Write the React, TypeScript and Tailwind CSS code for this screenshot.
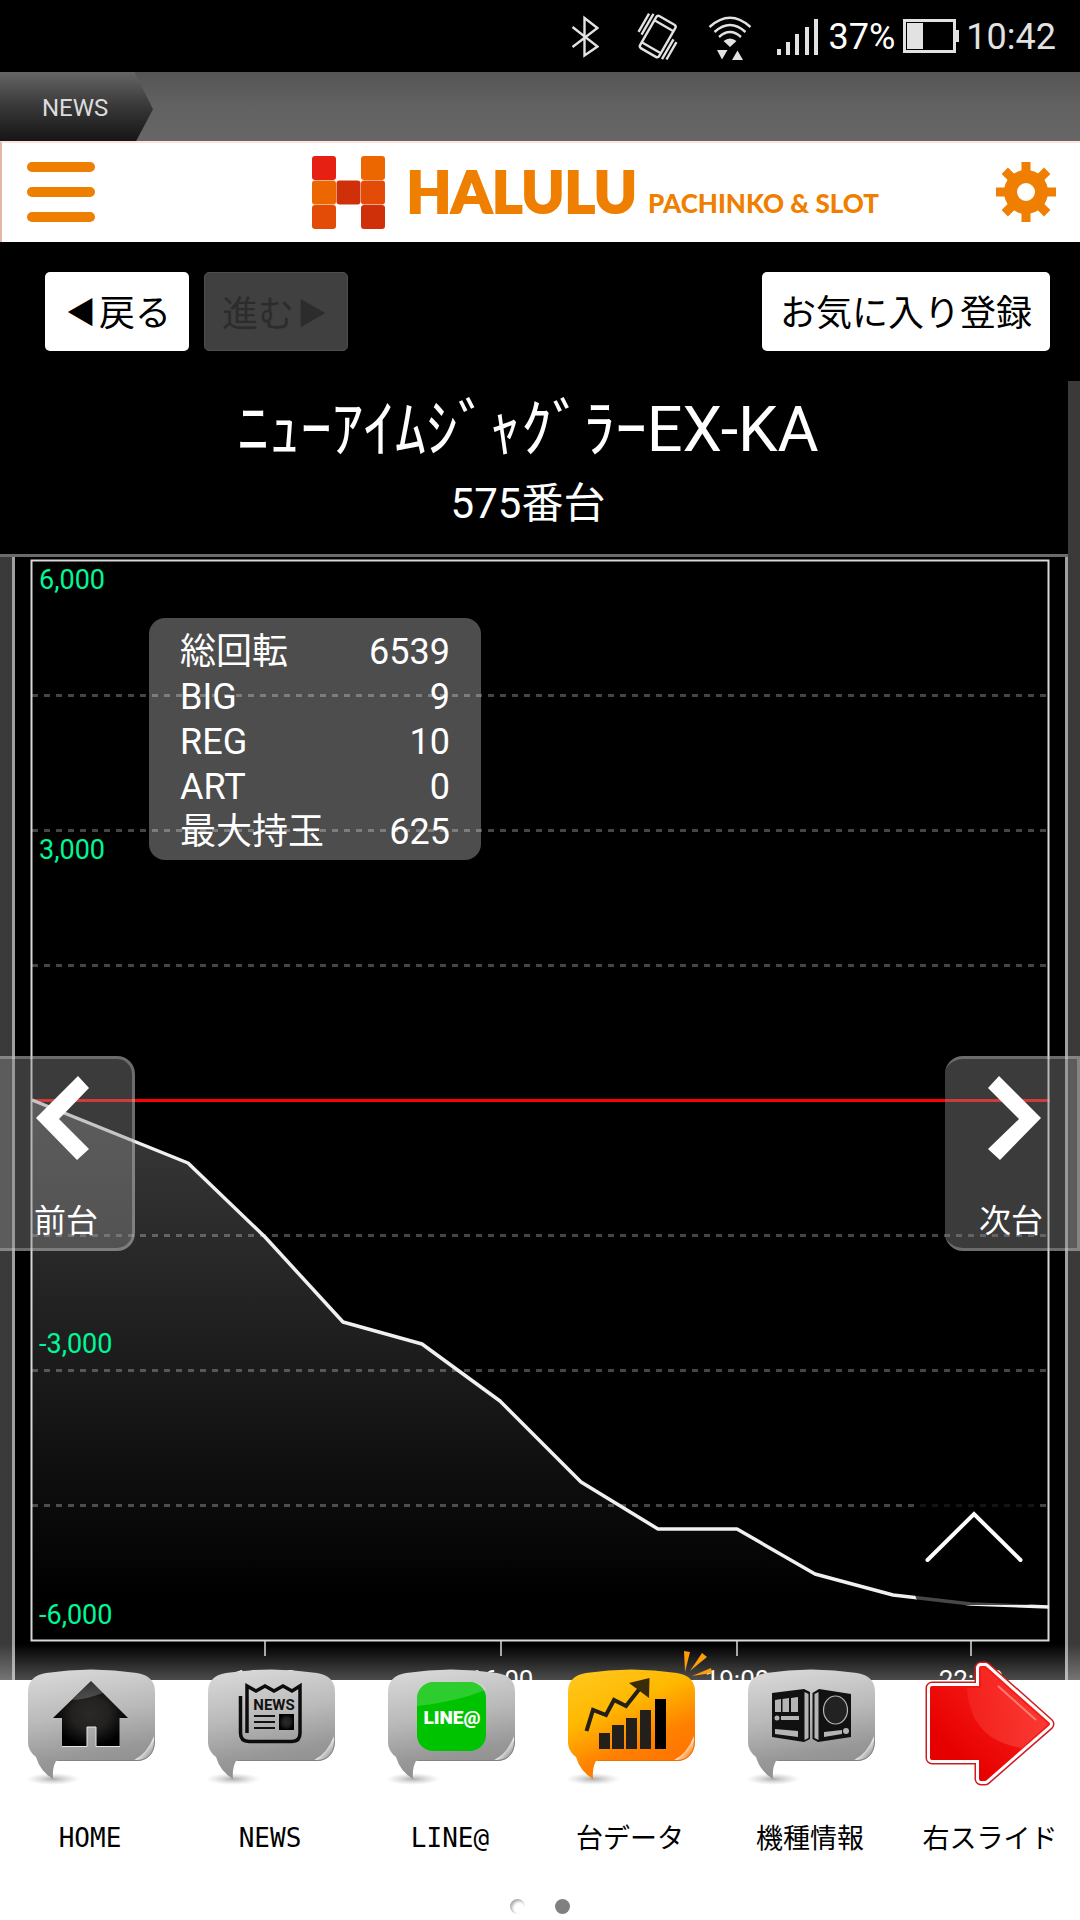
import type { ReactNode } from "react";

const SANS = "font-['Roboto','Noto_Sans_CJK_JP',sans-serif]";
const CJK = "font-['Noto_Sans_CJK_JP',sans-serif]";

function StatusBar() {
  return (
    <div className="flex h-[72px] shrink-0 items-center justify-end overflow-hidden bg-black pt-[2px] pr-6 text-[36px] leading-[42px] text-[#e2e2e2]">
      <svg className="mr-[33px]" width="28" height="72" viewBox="572 0 28 72" fill="none" stroke="#e2e2e2" strokeWidth="2.4" aria-label="Bluetooth">
        <path d="M573.5 26L598.5 45.5L585.5 54.5V17L598.5 27L573.5 46" />
      </svg>
      <svg className="mr-[26px]" width="50" height="72" viewBox="633 0 50 72" fill="none" stroke="#e2e2e2" strokeWidth="2.4" aria-label="Vibrate">
        <g transform="rotate(30 658.5 36)">
          <rect x="647.5" y="17" width="22" height="37" rx="2.5" />
          <path d="M647.5 23H669.5M647.5 48.500H669.500M643.5 18V42M639.500 20V41M673.5 53V30M677.5 51V31" />
        </g>
      </svg>
      <svg className="mr-[25px]" width="44" height="72" viewBox="708 0 44 72" fill="none" stroke="#e2e2e2" strokeWidth="2.4" aria-label="Wi-Fi">
        <path d="M709.500 26Q730 7.500 750.500 26M714.500 31Q730 17 745.500 31M719 36Q730 26 741 36" />
        <path d="M723.500 40Q730 35 736.500 40L730 46ZM717 49H727.500L722 58.500ZM732 59H743L737.500 49.500Z" fill="#e2e2e2" stroke="none" />
      </svg>
      <svg className="mr-[10px]" width="42" height="72" viewBox="777 0 42 72" fill="#e2e2e2" aria-label="Signal">
        <path d="M777 48h4v6h-4zM786 41h4v13h-4zM795 33h4v21h-4zM805 26h4v28h-4zM814 18h4v36h-4z" />
      </svg>
      <span className="text-white">37%</span>
      <svg className="mr-[6px] ml-[7px]" width="58" height="72" viewBox="902 1 58 72" aria-label="Battery">
        <rect x="904.500" y="20.500" width="50" height="31" fill="none" stroke="#e2e2e2" strokeWidth="3" />
        <path d="M907 23h16v26h-16zM955 30h4v12h-4z" fill="#e2e2e2" />
      </svg>
      <span>10:42</span>
    </div>
  );
}

function NewsTicker() {
  return (
    <div className="flex h-[69px] shrink-0 bg-linear-to-b from-[#555] via-[#626262] to-[#666]">
      <a
        href="#news"
        className="flex w-[153px] items-center bg-linear-to-b from-[#666] via-[#383838] to-[#161616] pt-[2px] pl-[42px] text-2xl text-[#dcdcdc] [clip-path:polygon(0_0,88%_0,100%_54%,89%_100%,0_100%)]"
      >
        NEWS
      </a>
    </div>
  );
}

function Header() {
  return (
    <header className="flex h-[101px] shrink-0 items-center border-t-2 border-l-2 border-t-[#fbe3de] border-l-[#e3b8a0] bg-white pr-6 pb-[2px] pl-[25px]">
      <button type="button" aria-label="Menu" className="flex flex-col gap-[15px]">
        <span className="h-[10px] w-[68px] rounded-full bg-[#ee7f00]" />
        <span className="h-[10px] w-[68px] rounded-full bg-[#ee7f00]" />
        <span className="h-[10px] w-[68px] rounded-full bg-[#ee7f00]" />
      </button>
      <a href="#top" className="mr-[117px] ml-auto flex items-center gap-[20px] font-['Lato'] font-black text-[#ee7f00]">
        <svg width="74" height="74" viewBox="0 0 74 74" aria-hidden="true">
          <rect x="0" y="1" width="24" height="24" rx="3" fill="#e62013" />
          <rect x="49" y="1" width="24" height="24" rx="3" fill="#ec6700" />
          <rect x="0" y="25.500" width="24" height="24" rx="3" fill="#ec6700" />
          <rect x="24.500" y="25.500" width="24" height="24" rx="3" fill="#cf300a" />
          <rect x="49" y="25.500" width="24" height="24" rx="3" fill="#e34c06" />
          <rect x="0" y="50" width="24" height="24" rx="3" fill="#e34c06" />
          <rect x="49" y="50" width="24" height="24" rx="3" fill="#cf300a" />
        </svg>
        <span className="flex items-baseline gap-[11px] pb-[2px]">
          <span className="text-[58px] leading-none [-webkit-text-stroke:2px_#ee7f00]">HALULU</span>
          <span className="text-[26px] leading-none">PACHINKO &amp; SLOT</span>
        </span>
      </a>
      <button type="button" aria-label="Settings">
        <svg width="60" height="60" viewBox="-30 -30 60 60" aria-hidden="true">
          <g fill="#ee7f00">
            {[0, 45, 90, 135, 180, 225, 270, 315].map((a) => (
              <rect key={a} x="-4.500" y="-30" width="9" height="14" transform={`rotate(${a})`} />
            ))}
          </g>
          <circle r="15.500" fill="none" stroke="#ee7f00" strokeWidth="13" />
        </svg>
      </button>
    </header>
  );
}

function Toolbar() {
  return (
    <div className={`flex shrink-0 gap-[15px] bg-black py-[30px] pr-[30px] pl-[45px] text-[36px] leading-[77px] ${CJK}`}>
      <button type="button" className="flex h-[79px] w-36 justify-center rounded-[5px] bg-white text-black">
        <span className="w-9 text-center text-[30px]">◀</span>
        戻る
      </button>
      <button type="button" disabled className="flex h-[79px] w-36 justify-center rounded-[5px] border border-[#4f4f4f] bg-[#404040] text-[#2c2c2c]">
        進む
        <span className="w-9 text-center text-[30px]">▶</span>
      </button>
      <button type="button" className="ml-auto flex h-[79px] rounded-[5px] bg-white px-[18px] text-black">
        お気に入り登録
      </button>
    </div>
  );
}

const POINTS: [number, number][] = [
  [32, 1100], [188, 1163], [265, 1237], [343, 1322], [422, 1344], [500, 1401], [581, 1482],
  [658, 1529], [737, 1529], [815, 1574], [893, 1595], [971, 1604], [1049, 1607],
];

const LINE = POINTS.map((p) => p.join(",")).join(" ");

const Y_LABELS: [string, number][] = [["6,000", 589], ["3,000", 859], ["-3,000", 1353], ["-6,000", 1624]];
const X_LABELS: [string, number][] = [["13:00", 265], ["16:00", 501], ["19:00", 737], ["22:00", 971]];

function Chart() {
  return (
    <svg className="block w-full" viewBox="15 557 1050 1160" aria-label="スランプグラフ">
      <defs>
        <linearGradient id="area" x1="0" y1="1100" x2="0" y2="1600" gradientUnits="userSpaceOnUse">
          <stop offset="0" stopColor="#3a3a3a" />
          <stop offset="1" stopColor="#000" />
        </linearGradient>
      </defs>
      <polygon points={`${LINE} 1049,1640 32,1640`} fill="url(#area)" />
      <g stroke="#fff" strokeOpacity=".27" strokeWidth="3" strokeDasharray="6 6">
        {[695, 830, 965, 1235, 1370, 1505].map((y) => (
          <line key={y} x1="32" x2="1049" y1={y + 0.5} y2={y + 0.5} />
        ))}
      </g>
      <line x1="32" x2="1050" y1="1100.500" y2="1100.500" stroke="#f00" strokeWidth="3" />
      <rect x="31.500" y="560.500" width="1017" height="1080" fill="none" stroke="#d8d8d8" strokeWidth="2" />
      <polyline points={LINE} fill="none" stroke="#f0f0f0" strokeWidth="3.500" strokeLinejoin="round" />
      <g fill="#00f896" fontSize="27">
        {Y_LABELS.map(([t, y]) => (
          <text key={t} x="39" y={y}>{t}</text>
        ))}
      </g>
      <g fill="#fff" fontSize="26" textAnchor="middle">
        {X_LABELS.map(([t, x]) => (
          <g key={t}>
            <line x1={x} x2={x} y1="1641" y2="1656" stroke="#d8d8d8" strokeWidth="1.500" />
            <text x={x} y="1689">{t}</text>
          </g>
        ))}
      </g>
    </svg>
  );
}

const STATS = [
  ["総回転", "6539"],
  ["BIG", "9"],
  ["REG", "10"],
  ["ART", "0"],
  ["最大持玉", "625"],
];

function Stats() {
  return (
    <div className="absolute top-16 left-[149px] w-[332px] rounded-2xl bg-white/30 px-[31px] pt-3 pb-[5px]">
      <table className="w-full text-[36px] leading-[45px] text-white">
        <tbody>
          {STATS.map(([k, v]) => (
            <tr key={k}>
              <th scope="row" className="p-0 text-left font-normal">{k}</th>
              <td className="p-0 text-right">{v}</td>
            </tr>
          ))}
        </tbody>
      </table>
    </div>
  );
}

function Machine() {
  return (
    <main className="relative flex min-h-0 flex-1 flex-col overflow-hidden bg-[#3a3a3a]">
      <div className="mr-3 shrink-0 bg-black pt-[13px] pr-3 pb-[22px] text-center text-white">
        <h1 className="text-[63px] leading-[72px]">ﾆｭｰｱｲﾑｼﾞｬｸﾞﾗｰEX-KA</h1>
        <p className="mt-[10px] text-[42px] leading-[56px]">575番台</p>
      </div>
      <section className="relative min-h-0 flex-1">
        <div className="mr-3 h-[3px] bg-[#6b6b6b]" />
        <div className="mx-3 border-x-3 border-[#a0a0a0] bg-black">
          <Chart />
        </div>
        <Stats />
        <button
          type="button"
          className="absolute top-[502px] left-0 flex h-[195px] w-[135px] flex-col items-center rounded-r-[18px] border-y-3 border-r-3 border-white/25 bg-[#8c8c8c]/42 pt-[17px] text-[32px] leading-[48px] text-white"
        >
          <svg className="mr-[6px]" width="54" height="86" viewBox="36 1076 54 86" fill="#fff" aria-hidden="true">
            <path d="M78 1076L89 1088L59 1119L89 1149L77 1160L36 1118Z" />
          </svg>
          <span className="mt-[35px]">前台</span>
        </button>
        <button
          type="button"
          className="absolute top-[502px] right-0 flex h-[195px] w-[135px] flex-col items-center rounded-l-[18px] border-y-3 border-r-3 border-white/25 bg-[#8c8c8c]/42 pt-[17px] text-[32px] leading-[48px] text-white"
        >
          <svg className="ml-2" width="54" height="86" viewBox="988 1076 54 86" fill="#fff" aria-hidden="true">
            <path d="M999 1076L988 1088L1019 1119L988 1149L1000 1160L1041 1118Z" />
          </svg>
          <span className="mt-[35px]">次台</span>
        </button>
        <div className="absolute inset-x-0 bottom-0 h-9 bg-linear-to-t from-white/30 to-white/0" />
        <button
          type="button"
          aria-label="ページトップへ"
          className="absolute right-[42px] bottom-[75px] flex h-[123px] w-[123px] rounded-xl bg-black/70 pt-[29px] pl-[10px]"
        >
          <svg width="98" height="52" viewBox="0 0 98 52" fill="none" stroke="#fff" strokeWidth="4" strokeLinecap="round" aria-hidden="true">
            <path d="M2.500 49L49 3L95.500 49" />
          </svg>
        </button>
      </section>
    </main>
  );
}

function Defs() {
  return (
    <svg width="0" height="0" className="absolute" aria-hidden="true">
      <defs>
        <linearGradient id="grey" x1="0.400" y1="0" x2="0.600" y2="1">
          <stop offset="0" stopColor="#d6d6d6" />
          <stop offset=".4" stopColor="#bababa" />
          <stop offset=".75" stopColor="#989898" />
          <stop offset="1" stopColor="#8c8c8c" />
        </linearGradient>
        <linearGradient id="orange" x1="0.200" y1="0" x2="0.700" y2="1">
          <stop offset="0" stopColor="#ffc61a" />
          <stop offset=".35" stopColor="#ffb800" />
          <stop offset=".7" stopColor="#ff7f00" />
          <stop offset="1" stopColor="#ff7200" />
        </linearGradient>
        <linearGradient id="peel" x1="0" y1="0" x2="1" y2="1">
          <stop offset=".35" stopColor="#fff" stopOpacity="0" />
          <stop offset=".55" stopColor="#fff" stopOpacity=".75" />
          <stop offset=".8" stopColor="#fff" stopOpacity=".1" />
        </linearGradient>
        <radialGradient id="shade">
          <stop offset="0" stopColor="#777" stopOpacity=".6" />
          <stop offset="1" stopColor="#aaa" stopOpacity="0" />
        </radialGradient>
        <radialGradient id="ink">
          <stop offset="0" stopColor="#2b2927" />
          <stop offset=".5" stopColor="#232120" />
          <stop offset="1" stopColor="#000" />
        </radialGradient>
        <linearGradient id="red" x1="0" y1="1" x2="1" y2="0">
          <stop offset=".2" stopColor="#e60000" />
          <stop offset="1" stopColor="#ff2a24" />
        </linearGradient>
        <linearGradient id="shine" x1="0" y1="0" x2="1" y2="1">
          <stop offset="0" stopColor="#ff5a50" stopOpacity=".15" />
          <stop offset="1" stopColor="#ff5a50" stopOpacity=".5" />
        </linearGradient>
      </defs>
    </svg>
  );
}

function Bubble({ orange = false, children }: { orange?: boolean; children: ReactNode }) {
  return (
    <svg width="180" height="140" viewBox="0 0 180 140" aria-hidden="true">
      <ellipse cx="53" cy="129" rx="27" ry="6" fill="url(#shade)" />
      <path
        d="M28 42C28 31 34 25 46 23Q91 16 137 23C149 25 155 31 155 42V91C155 103 148 111 137 111H56Q52 118 53 129Q40 121 36 107C30 102 28 98 28 91Z"
        fill={orange ? "url(#orange)" : "url(#grey)"}
      />
      <path d="M154 86V91C154 103 148 110 137 110H134Q147 104 154 86Z" fill="url(#peel)" />
      <path d="M154.500 91C154.500 103 148 110.500 137 110.500H58" fill="none" stroke={orange ? "#e06a00" : "#777"} strokeOpacity=".6" />
      {children}
    </svg>
  );
}

function HomeIcon() {
  return (
    <Bubble>
      <path d="M91 31L128 68H119.500V96H96V77H87V96H62V68H53Z" fill="url(#ink)" />
      <path d="M62 96.500H87V77H96V96.500H120" fill="none" stroke="#dfe8e4" strokeWidth="1" />
      <path d="M91 31L103 43Q84 50 72 50Z" fill="#fff" fillOpacity=".2" />
    </Bubble>
  );
}

function NewsIcon() {
  return (
    <Bubble>
      <path d="M67 83V36L76 41L85 36L94 41L103 36L112 41L120 36V83Q120 91.500 112 91.500H69Q60.500 91.500 60.500 83V46" fill="none" stroke="#0c0c0c" strokeWidth="3.500" />
      <text x="94" y="60" textAnchor="middle" fontSize="15" fontWeight="700" fill="#111" fontFamily="Roboto">NEWS</text>
      <path d="M74 66H95M74 72H95M74 78H95" stroke="#111" strokeWidth="2.200" />
      <rect x="99" y="64" width="15" height="16" fill="url(#ink)" />
    </Bubble>
  );
}

function LineIcon() {
  return (
    <Bubble>
      <rect x="57" y="32" width="69" height="69" rx="16" fill="#00c300" />
      <path d="M57 56V48Q57 32 73 32H110Q124 32 126 40Q95 52 57 56Z" fill="#fff" fillOpacity=".18" />
      <text x="92" y="74" textAnchor="middle" fontSize="19" fontWeight="900" fill="#fff" fontFamily="Roboto">LINE@</text>
    </Bubble>
  );
}

function DataIcon() {
  return (
    <Bubble orange>
      <path d="M144 1L150 2L145 22ZM162 3L167 7L150 21ZM171 18L172 23L152 26Z" fill="#ff9d0a" />
      <path d="M59 83H70V99H59ZM72 75H84V99H72ZM86 68H97V99H86ZM100 60H111V99H100Z" fill="#231f1a" />
      <rect x="115" y="49" width="11" height="50" fill="#000" />
      <path d="M46.500 81L53 60L66 65L74 50L86 56L101 37" fill="none" stroke="#231f1a" strokeWidth="4" />
      <path d="M109.500 28L89 33L109 48Z" fill="#3a2c08" />
    </Bubble>
  );
}

function MachineIcon() {
  return (
    <Bubble>
      <path d="M52 43L84 39L90 42V89L84 92L52 87ZM131 44L99 39L92.500 43V89L98 92L131 87Z" fill="#111" />
      <path d="M84.500 42L88.500 44V88L84.500 90ZM98.500 42L94.500 44V88L98.500 90Z" fill="#b5b5b5" />
      <path d="M55 50L61 49V62H55ZM62.500 49L69 48V62H62.500ZM71 48L78 47V62H71ZM61 66H79V70H61ZM55 79L78 81V87L55 84ZM104 82L122 80V84L104 87Z" fill="#b5b5b5" />
      <circle cx="57" cy="68" r="2.500" fill="#b5b5b5" />
      <circle cx="126" cy="81" r="3" fill="#b5b5b5" />
      <ellipse cx="115.500" cy="60" rx="12" ry="14" fill="#222" stroke="#b5b5b5" strokeWidth="1.200" />
    </Bubble>
  );
}

function ArrowIcon() {
  const d = "M32 38H81V18H85L148 74L85 129H81V108H32Z";
  return (
    <svg width="180" height="140" viewBox="0 0 180 140" strokeLinejoin="round" aria-hidden="true">
      <path d={d} fill="none" stroke="#cf1b20" strokeWidth="13" />
      <path d={d} fill="none" stroke="#fff" strokeWidth="10" />
      <path d={d} fill="url(#red)" stroke="url(#red)" strokeWidth="4" />
      <path d="M67 38H81V18H85L148 74L122 98Q70 90 67 38Z" fill="url(#shine)" />
      <path d="M98 36L136 70" stroke="#ff7a75" strokeWidth="2" />
    </svg>
  );
}

const TABS: [string, ReactNode, boolean][] = [
  ["HOME", <HomeIcon />, true],
  ["NEWS", <NewsIcon />, true],
  ["LINE@", <LineIcon />, true],
  ["台データ", <DataIcon />, false],
  ["機種情報", <MachineIcon />, false],
  ["右スライド", <ArrowIcon />, false],
];

function TabBar() {
  return (
    <nav className="relative shrink-0 bg-white pb-[6px]">
      <Defs />
      <ul className="-mt-[30px] grid grid-cols-6">
        {TABS.map(([label, icon, mono]) => (
          <li key={label}>
            <a href={`#${label}`} className="flex flex-col items-center text-black">
              {icon}
              <span
                className={
                  mono
                    ? "mt-7 text-[26px] leading-10 font-['DejaVu_Sans_Mono',monospace]"
                    : "mt-7 mb-[2px] text-[27px] leading-[38px] font-['Noto_Sans_CJK_JP',sans-serif]"
                }
              >
                {label}
              </span>
            </a>
          </li>
        ))}
      </ul>
      <div className="mt-[41px] flex justify-center gap-[30px]">
        <button type="button" aria-label="Page 1" className="size-[15px] rounded-full bg-white shadow-[inset_2px_2px_3px_#aaa]" />
        <button type="button" aria-label="Page 2" className="size-[15px] rounded-full bg-[#808080]" />
      </div>
    </nav>
  );
}

export default function App() {
  return (
    <div className={`flex h-screen flex-col bg-black ${SANS}`}>
      <StatusBar />
      <NewsTicker />
      <Header />
      <Toolbar />
      <Machine />
      <TabBar />
    </div>
  );
}
